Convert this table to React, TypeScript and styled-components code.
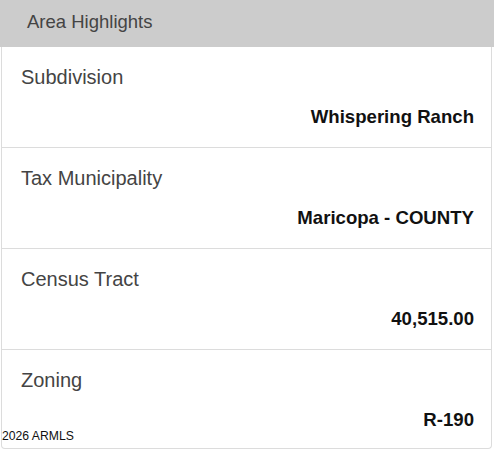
import React from 'react';
import styled, { createGlobalStyle } from "styled-components";

const rows = [
    { label: "Subdivision", value: "Whispering Ranch" },
    { label: "Tax Municipality", value: "Maricopa - COUNTY" },
    { label: "Census Tract", value: "40,515.00" },
    { label: "Zoning", value: "R-190" },
];

function App() {
    return (
        <Page>
            <GlobalStyle/>
            <Header>Area Highlights</Header>
            <List>
                {rows.map((r) => (
                    <Row key={r.label}>
                        <Label>{r.label}</Label>
                        <Value>{r.value}</Value>
                    </Row>
                ))}
            </List>
            <Watermark>2026 ARMLS</Watermark>
        </Page>
    );
}

export default App;

const GlobalStyle = createGlobalStyle`
  body {
    margin: 0;
    background: #fff;
    font-family: "Liberation Sans", Arial, sans-serif;
  }
`

const Page = styled.div`
  position: relative;
  width: 494px;
  height: 450px;
  overflow: hidden;
`

const Header = styled.div`
  height: 47px;
  box-sizing: border-box;
  padding: 11px 0 0 27px;
  background-color: #cccccc;
  color: #444;
  font-size: 18.5px;
  line-height: 21px;
`

const List = styled.div`
  margin: 0 2px 0 1px;
  border: 1px solid #dcdcdc;
  border-top: none;
  border-radius: 0 0 4px 4px;
  height: 402px;
  box-sizing: border-box;
  display: flex;
  flex-direction: column;
`

const Row = styled.div`
  display: flex;
  flex-direction: column;
  height: 101px;
  flex-shrink: 0;
  box-sizing: border-box;
  padding: 19px 17px 0 19px;
  border-bottom: 1px solid #dcdcdc;

  &:last-child {
    border-bottom: none;
  }
`

const Label = styled.div`
  color: #444;
  font-size: 20px;
  line-height: 23px;
`

const Value = styled.div`
  margin-top: 17px;
  text-align: right;
  color: #111;
  font-weight: bold;
  font-size: 18.6px;
  line-height: 21px;
`

const Watermark = styled.div`
  position: absolute;
  left: 2px;
  top: 429px;
  color: #111;
  font-size: 12.2px;
  line-height: 14px;
`
